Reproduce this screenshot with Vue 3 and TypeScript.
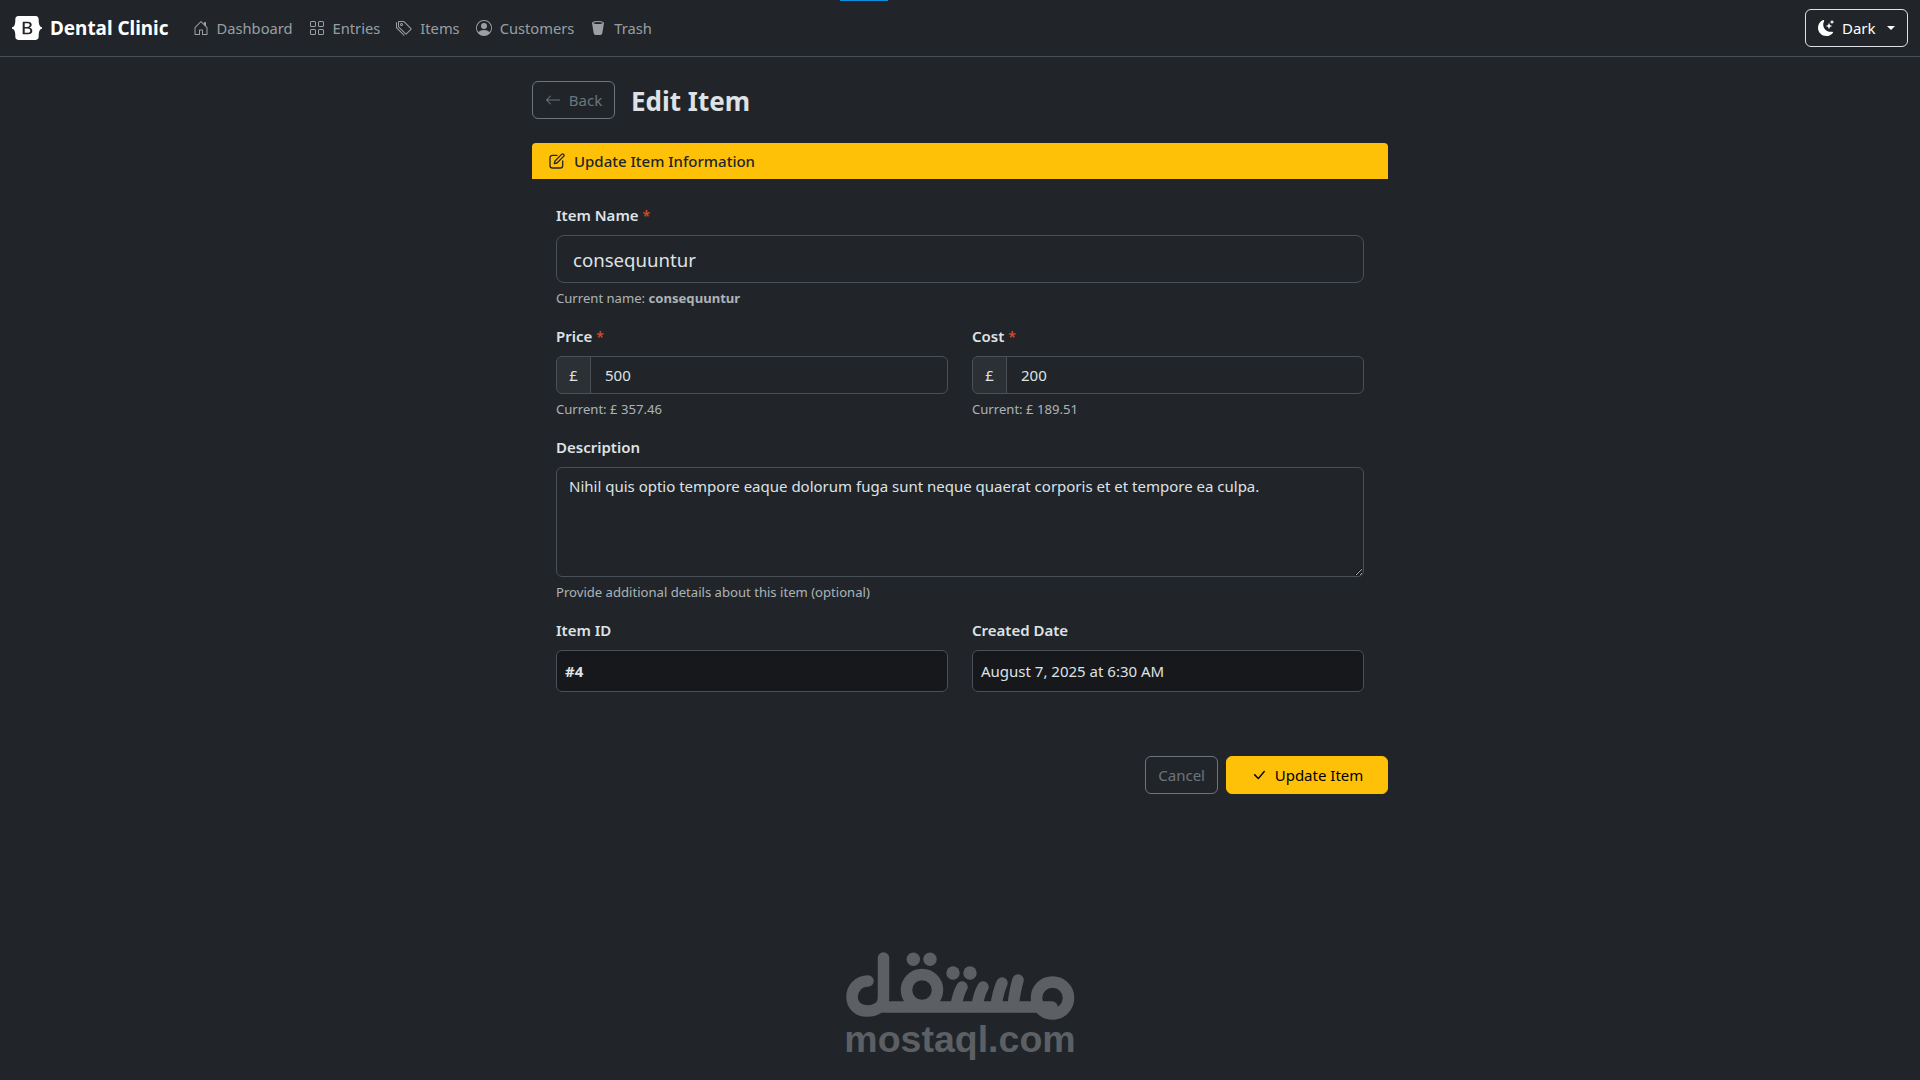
<script setup lang="ts">
import { ref } from 'vue'

const name = ref('consequuntur')
const price = ref('500')
const cost = ref('200')
const description = ref('Nihil quis optio tempore eaque dolorum fuga sunt neque quaerat corporis et et tempore ea culpa.')

const links = [
  { label: 'Dashboard', paths: ['M8.354 1.146a.5.5 0 0 0-.708 0l-6 6A.5.5 0 0 0 1.5 7.5v7a.5.5 0 0 0 .5.5h4.5a.5.5 0 0 0 .5-.5v-4h2v4a.5.5 0 0 0 .5.5H14a.5.5 0 0 0 .5-.5v-7a.5.5 0 0 0-.146-.354L13 5.793V2.5a.5.5 0 0 0-.5-.5h-1a.5.5 0 0 0-.5.5v1.293zM2.5 14V7.707l5.5-5.5 5.5 5.5V14H10v-4a.5.5 0 0 0-.5-.5h-3a.5.5 0 0 0-.5.5v4z'] },
  { label: 'Entries', paths: ['M1 2.5A1.5 1.5 0 0 1 2.5 1h3A1.5 1.5 0 0 1 7 2.5v3A1.5 1.5 0 0 1 5.5 7h-3A1.5 1.5 0 0 1 1 5.5zM2.5 2a.5.5 0 0 0-.5.5v3a.5.5 0 0 0 .5.5h3a.5.5 0 0 0 .5-.5v-3a.5.5 0 0 0-.5-.5zm6.5.5A1.5 1.5 0 0 1 10.5 1h3A1.5 1.5 0 0 1 15 2.5v3A1.5 1.5 0 0 1 13.5 7h-3A1.5 1.5 0 0 1 9 5.5zm1.5-.5a.5.5 0 0 0-.5.5v3a.5.5 0 0 0 .5.5h3a.5.5 0 0 0 .5-.5v-3a.5.5 0 0 0-.5-.5zM1 10.5A1.5 1.5 0 0 1 2.5 9h3A1.5 1.5 0 0 1 7 10.5v3A1.5 1.5 0 0 1 5.5 15h-3A1.5 1.5 0 0 1 1 13.5zm1.5-.5a.5.5 0 0 0-.5.5v3a.5.5 0 0 0 .5.5h3a.5.5 0 0 0 .5-.5v-3a.5.5 0 0 0-.5-.5zm6.5.5A1.5 1.5 0 0 1 10.5 9h3a1.5 1.5 0 0 1 1.5 1.5v3a1.5 1.5 0 0 1-1.5 1.5h-3A1.5 1.5 0 0 1 9 13.5zm1.5-.5a.5.5 0 0 0-.5.5v3a.5.5 0 0 0 .5.5h3a.5.5 0 0 0 .5-.5v-3a.5.5 0 0 0-.5-.5z'] },
  { label: 'Items', paths: ['M3 2v4.586l7 7L14.586 9l-7-7zM2 2a1 1 0 0 1 1-1h4.586a1 1 0 0 1 .707.293l7 7a1 1 0 0 1 0 1.414l-4.586 4.586a1 1 0 0 1-1.414 0l-7-7A1 1 0 0 1 2 6.586z', 'M5.5 5a.5.5 0 1 1 0-1 .5.5 0 0 1 0 1m0 1a1.5 1.5 0 1 0 0-3 1.5 1.5 0 0 0 0 3M1 7.086a1 1 0 0 0 .293.707L8.75 15.25l-.043.043a1 1 0 0 1-1.414 0l-7-7A1 1 0 0 1 0 7.586V3a1 1 0 0 1 1-1z'] },
  { label: 'Customers', paths: ['M11 6a3 3 0 1 1-6 0 3 3 0 0 1 6 0', 'M0 8a8 8 0 1 1 16 0A8 8 0 0 1 0 8m8-7a7 7 0 0 0-5.468 11.37C3.242 11.226 4.805 10 8 10s4.757 1.225 5.468 2.37A7 7 0 0 0 8 1'] },
  { label: 'Trash', paths: ['M2.037 3.225A.7.7 0 0 1 2 3c0-1.105 2.686-2 6-2s6 .895 6 2a.7.7 0 0 1-.037.225l-1.684 10.104A2 2 0 0 1 10.305 15H5.694a2 2 0 0 1-1.973-1.671zm9.89-.69C10.966 2.214 9.578 2 8 2c-1.58 0-2.968.215-3.926.534-.477.16-.795.327-.975.466.18.14.498.307.975.466C5.032 3.786 6.42 4 8 4s2.967-.215 3.926-.534c.477-.16.795-.327.975-.466-.18-.14-.498-.307-.975-.466z'] },
]
</script>

<template>
  <div class="page">
    <div class="progress"></div>

    <nav class="navbar">
      <a class="brand">
        <svg class="brand-logo" viewBox="0 0 118 94" fill="currentColor">
          <path fill-rule="evenodd" clip-rule="evenodd" d="M24.509 0c-6.733 0-11.715 5.893-11.492 12.284.214 6.14-.064 14.092-2.066 20.577C8.943 39.365 5.547 43.485 0 44.014v5.972c5.547.529 8.943 4.649 10.951 11.153 2.002 6.485 2.28 14.437 2.066 20.577C12.794 88.106 17.776 94 24.51 94H93.5c6.733 0 11.714-5.893 11.491-12.284-.214-6.14.064-14.092 2.066-20.577 2.009-6.504 5.396-10.624 10.943-11.153v-5.972c-5.547-.529-8.934-4.649-10.943-11.153-2.002-6.484-2.28-14.437-2.066-20.577C105.214 5.894 100.233 0 93.5 0H24.508zM80 57.863C80 66.663 73.436 72 62.543 72H44a2 2 0 01-2-2V24a2 2 0 012-2h18.437c9.083 0 15.044 4.92 15.044 12.474 0 5.302-4.01 10.049-9.119 10.88v.277C75.317 46.394 80 51.21 80 57.863zM60.521 28.34H49.948v14.934h8.905c6.884 0 10.68-2.772 10.68-7.727 0-4.643-3.264-7.207-9.012-7.207zM49.948 49.2v16.458H60.91c7.167 0 10.964-2.876 10.964-8.281 0-5.406-3.903-8.178-11.425-8.178H49.948z"/>
        </svg>
        Dental Clinic
      </a>
      <a v-for="link in links" :key="link.label" class="nav-link">
        <svg class="icon" viewBox="0 0 16 16" fill="currentColor">
          <path v-for="d in link.paths" :key="d" :d="d"/>
        </svg>
        {{ link.label }}
      </a>
      <button class="theme-btn">
        <svg class="icon" viewBox="0 0 16 16" fill="currentColor">
          <path d="M6 .278a.77.77 0 0 1 .08.858 7.2 7.2 0 0 0-.878 3.46c0 4.021 3.278 7.277 7.318 7.277q.792-.001 1.533-.16a.79.79 0 0 1 .81.316.73.73 0 0 1-.031.893A8.35 8.35 0 0 1 8.344 16C3.734 16 0 12.286 0 7.71 0 4.266 2.114 1.312 5.124.06A.75.75 0 0 1 6 .278"/>
          <path d="M10.794 3.148a.217.217 0 0 1 .412 0l.387 1.162c.173.518.579.924 1.097 1.097l1.162.387a.217.217 0 0 1 0 .412l-1.162.387a1.73 1.73 0 0 0-1.097 1.097l-.387 1.162a.217.217 0 0 1-.412 0l-.387-1.162A1.73 1.73 0 0 0 9.31 6.593l-1.162-.387a.217.217 0 0 1 0-.412l1.162-.387a1.73 1.73 0 0 0 1.097-1.097zM13.863.099a.145.145 0 0 1 .274 0l.258.774c.115.346.386.617.732.732l.774.258a.145.145 0 0 1 0 .274l-.774.258a1.16 1.16 0 0 0-.732.732l-.258.774a.145.145 0 0 1-.274 0l-.258-.774a1.16 1.16 0 0 0-.732-.732l-.774-.258a.145.145 0 0 1 0-.274l.774-.258c.346-.115.617-.386.732-.732z"/>
        </svg>
        <span>Dark</span>
        <i class="caret"></i>
      </button>
    </nav>

    <main class="content">
      <div class="title-row">
        <a class="btn btn-outline back-btn">
          <svg class="icon" viewBox="0 0 16 16" fill="currentColor">
            <path fill-rule="evenodd" d="M15 8a.5.5 0 0 0-.5-.5H2.707l3.147-3.146a.5.5 0 1 0-.708-.708l-4 4a.5.5 0 0 0 0 .708l4 4a.5.5 0 0 0 .708-.708L2.707 8.5H14.5A.5.5 0 0 0 15 8"/>
          </svg>
          Back
        </a>
        <h1>Edit Item</h1>
      </div>

      <section class="card">
        <header class="card-header">
          <svg class="icon" viewBox="0 0 16 16" fill="none" stroke="currentColor" stroke-width="1.3" stroke-linecap="round" stroke-linejoin="round">
            <path d="M8 2.3H3.6A2.6 2.6 0 0 0 1 4.9v7.5A2.6 2.6 0 0 0 3.6 15h7.5a2.6 2.6 0 0 0 2.6-2.6V8"/>
            <path d="M6 8 12.6 1.4a1.4 1.4 0 0 1 2 2L8 10l-2.7.7z"/>
          </svg>
          Update Item Information
        </header>

        <form class="card-body" @submit.prevent>
          <div class="field">
            <label>Item Name <span class="req">*</span></label>
            <input v-model="name" class="control control-lg" type="text" />
            <small>Current name: <strong>consequuntur</strong></small>
          </div>

          <div class="two-col">
            <div class="field">
              <label>Price <span class="req">*</span></label>
              <div class="input-group">
                <span class="addon">£</span>
                <input v-model="price" class="control" type="text" />
              </div>
              <small>Current: £ 357.46</small>
            </div>
            <div class="field">
              <label>Cost <span class="req">*</span></label>
              <div class="input-group">
                <span class="addon">£</span>
                <input v-model="cost" class="control" type="text" />
              </div>
              <small>Current: £ 189.51</small>
            </div>
          </div>

          <div class="field">
            <label>Description</label>
            <textarea v-model="description" class="control area"></textarea>
            <small>Provide additional details about this item (optional)</small>
          </div>

          <div class="two-col">
            <div class="field">
              <label>Item ID</label>
              <div class="plain"><strong>#4</strong></div>
            </div>
            <div class="field">
              <label>Created Date</label>
              <div class="plain">August 7, 2025 at 6:30 AM</div>
            </div>
          </div>
        </form>

        <div class="actions">
          <a class="btn btn-outline">Cancel</a>
          <button class="btn btn-warning">
            <svg class="icon" viewBox="0 0 16 16" fill="currentColor">
              <path d="M12.736 3.97a.733.733 0 0 1 1.047 0c.286.289.29.756.01 1.05L7.88 12.01a.733.733 0 0 1-1.065.02L3.217 8.384a.757.757 0 0 1 0-1.06.733.733 0 0 1 1.047 0l3.052 3.093 5.4-6.425z"/>
            </svg>
            Update Item
          </button>
        </div>
      </section>
    </main>

    <div class="watermark">
      <svg width="280" height="93" viewBox="0 0 280 93" fill="none" stroke="currentColor" stroke-width="11.5" stroke-linecap="round">
        <path d="M48 51 C38 51 32 59 32 67 C32 75 38 81 47 81 C56 81 63.5 77 63.5 68 V28"/>
        <path d="M63 77 H232"/>
        <circle cx="102" cy="60" r="15.5"/>
        <path d="M136 76 Q138 64 142 57"/>
        <path d="M157 76 Q159 64 163 57"/>
        <path d="M176 76 Q178 62 182 53"/>
        <path d="M193 76 Q195 60 198 50"/>
        <circle cx="232.5" cy="68" r="16"/>
        <g fill="currentColor" stroke="none">
          <circle cx="93.3" cy="29.3" r="6.7"/>
          <circle cx="110" cy="29.3" r="6.7"/>
          <circle cx="133" cy="43" r="6.7"/>
          <circle cx="150" cy="43" r="6.7"/>
        </g>
      </svg>
      <span>mostaql.com</span>
    </div>
  </div>
</template>

<style scoped>
.page {
  position: relative;
  width: 1920px;
  height: 1080px;
  overflow: hidden;
  background: #212529;
  color: #dee2e6;
  font-family: "Noto Sans", "Open Sans", sans-serif;
  font-size: 15px;
  line-height: 24px;
}
.progress {
  position: absolute;
  left: 840px;
  top: 0;
  width: 48px;
  height: 1px;
  background: #0d8ddb;
}
.navbar {
  display: flex;
  align-items: center;
  height: 56px;
  padding: 0 12px;
  border-bottom: 1px solid #495057;
}
.brand {
  display: flex;
  align-items: center;
  gap: 8px;
  margin-right: 16px;
  color: #fff;
  font-size: 18.9px;
  font-weight: 700;
}
.brand-logo {
  width: 30px;
  height: 24px;
}
.nav-link {
  display: flex;
  align-items: center;
  gap: 8px;
  padding: 0 8px;
  font-size: 14.7px;
  color: rgba(222, 226, 230, 0.65);
}
.icon {
  width: 16px;
  height: 16px;
  flex: none;
}
.theme-btn {
  display: flex;
  align-items: center;
  gap: 8px;
  height: 38px;
  width: 103px;
  margin-left: auto;
  padding: 0 12px;
  background: transparent;
  border: 1px solid #dee2e6;
  border-radius: 6px;
  color: #fff;
  font: inherit;
}
.caret {
  margin-left: 3px;
  border-top: 4.8px solid #fff;
  border-left: 4.8px solid transparent;
  border-right: 4.8px solid transparent;
}
.content {
  width: 856px;
  margin: 24px auto 0;
}
.title-row {
  display: flex;
  align-items: center;
  gap: 16px;
  margin-bottom: 24px;
}
h1 {
  margin: 0;
  padding-top: 2px;
  color: #dee2e6;
  font-size: 26px;
  line-height: 36px;
  font-weight: 700;
}
.btn {
  display: inline-flex;
  align-items: center;
  justify-content: center;
  gap: 8px;
  box-sizing: border-box;
  height: 38px;
  padding: 0 12px;
  border: 1px solid transparent;
  border-radius: 6px;
  font: inherit;
}
.btn-outline {
  border-color: #6c757d;
  color: #6c757d;
}
.back-btn {
  width: 83px;
}
.btn-warning {
  width: 162px;
  background: #ffc107;
  border-color: #ffc107;
  color: #000;
}
.card-header {
  display: flex;
  align-items: center;
  gap: 9px;
  height: 36px;
  padding: 0 17px;
  background: #ffc107;
  border-radius: 4px 4px 0 0;
  color: #212529;
  font-weight: 500;
}
.card-body {
  display: flex;
  flex-direction: column;
  gap: 16px;
  padding: 24px 24px 0;
}
.field {
  display: flex;
  flex-direction: column;
}
.two-col {
  display: grid;
  grid-template-columns: 1fr 1fr;
  gap: 24px;
}
label {
  margin-bottom: 8px;
  font-weight: 600;
}
.req {
  color: #d9482b;
  font-size: 14px;
  line-height: 0;
}
small {
  margin-top: 4px;
  padding-top: 1px;
  font-size: 13.1px;
  line-height: 20px;
  color: rgba(222, 226, 230, 0.75);
}
.control {
  box-sizing: border-box;
  width: 100%;
  height: 38px;
  padding: 0 12px;
  background: #212529;
  border: 1px solid #495057;
  border-radius: 6px;
  color: #dee2e6;
  font: inherit;
  outline: none;
}
.control-lg {
  height: 48px;
  padding: 1px 16px 0;
  border-radius: 8px;
  font-size: 18.6px;
}
.area {
  display: block;
  height: 110px;
  padding: 6px 12px;
  resize: vertical;
}
.input-group {
  display: flex;
}
.input-group .control {
  min-width: 0;
  padding-left: 14px;
  border-radius: 0 6px 6px 0;
  margin-left: -1px;
}
.addon {
  display: flex;
  align-items: center;
  justify-content: center;
  flex: none;
  box-sizing: border-box;
  width: 35px;
  height: 38px;
  background: #2b3035;
  border: 1px solid #495057;
  border-radius: 6px 0 0 6px;
}
.plain {
  display: flex;
  align-items: center;
  box-sizing: border-box;
  height: 42px;
  padding: 0 8px;
  background: #16181b;
  border: 1px solid #495057;
  border-radius: 6px;
}
.actions {
  display: flex;
  justify-content: flex-end;
  gap: 8px;
  margin-top: 64px;
}
.watermark {
  position: absolute;
  left: 820px;
  top: 930px;
  width: 280px;
  display: flex;
  flex-direction: column;
  align-items: center;
  color: #5c6064;
}
.watermark span {
  margin-top: -4px;
  font-family: "Liberation Sans", Arial, sans-serif;
  font-size: 37.5px;
  line-height: 40px;
  font-weight: 700;
}
</style>
